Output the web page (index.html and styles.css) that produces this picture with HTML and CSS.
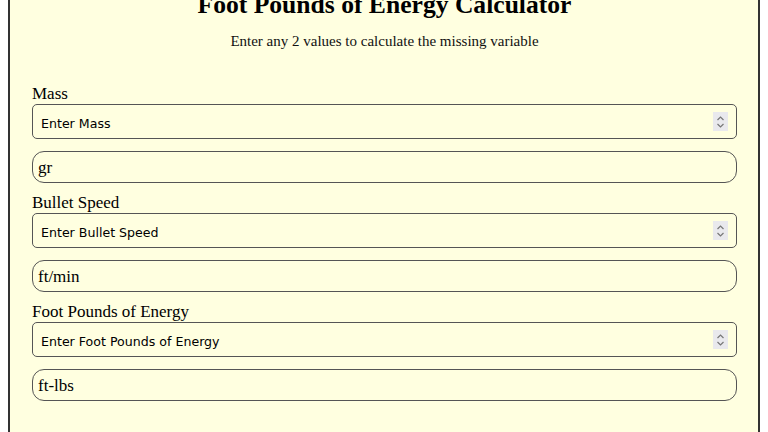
FILE: index.html
```html
<!DOCTYPE html>
<html lang="en">
<head>
<meta charset="utf-8">
<title>Foot Pounds of Energy Calculator</title>
<link rel="stylesheet" href="styles.css">
</head>
<body>
<div class="calc">
  <h1 class="title">Foot Pounds of Energy Calculator</h1>
  <p class="subtitle">Enter any 2 values to calculate the missing variable</p>
  <form class="form">
    <div class="group">
      <label class="label" for="mass">Mass</label>
      <span class="num-wrap">
        <input class="num" id="mass" type="number" placeholder="Enter Mass">
        <svg class="spin" width="15" height="19" viewBox="0 0 15 19"><polyline points="4.5,8 7.5,5 10.5,8" /><polyline points="4.5,12 7.5,15 10.5,12" /></svg>
      </span>
      <select class="unit"><option>gr</option></select>
    </div>
    <div class="group">
      <label class="label" for="speed">Bullet Speed</label>
      <span class="num-wrap">
        <input class="num" id="speed" type="number" placeholder="Enter Bullet Speed">
        <svg class="spin" width="15" height="19" viewBox="0 0 15 19"><polyline points="4.5,8 7.5,5 10.5,8" /><polyline points="4.5,12 7.5,15 10.5,12" /></svg>
      </span>
      <select class="unit"><option>ft/min</option></select>
    </div>
    <div class="group">
      <label class="label" for="fpe">Foot Pounds of Energy</label>
      <span class="num-wrap">
        <input class="num" id="fpe" type="number" placeholder="Enter Foot Pounds of Energy">
        <svg class="spin" width="15" height="19" viewBox="0 0 15 19"><polyline points="4.5,8 7.5,5 10.5,8" /><polyline points="4.5,12 7.5,15 10.5,12" /></svg>
      </span>
      <select class="unit"><option>ft-lbs</option></select>
    </div>
  </form>
</div>
</body>
</html>
```
FILE: styles.css
```css
html, body {
  background: #ffffff;
}
body {
  margin: 0 8px;
  font-family: "Liberation Serif", "Times New Roman", serif;
  color: #000;
}
.calc {
  overflow: hidden;
  border: 2px solid #333333;
  border-top: 0;
  background: #ffffe0;
  padding: 0 21px 60px 22px;
}
.title {
  margin: -9px 0 0;
  font-size: 25.6px;
  line-height: 28px;
  font-weight: bold;
  text-align: center;
}
.subtitle {
  margin: 14px 0 0;
  font-size: 15px;
  line-height: 17px;
  text-align: center;
  color: #111;
}
.form {
  margin: 34px 0 0;
}
.group {
  display: flex;
  flex-direction: column;
  margin-bottom: 10px;
}
.label {
  display: block;
  font-size: 17px;
  line-height: 19px;
}
.num-wrap {
  position: relative;
  display: block;
  margin-top: 1px;
}
.num {
  display: block;
  box-sizing: border-box;
  width: 100%;
  height: 35px;
  margin: 0;
  padding: 3px 8px 0;
  border: 1px solid #555555;
  border-radius: 5px;
  background: #ffffe0;
  font-family: "DejaVu Sans", Verdana, sans-serif;
  font-size: 12.6px;
  color: #000;
  outline: none;
  -moz-appearance: textfield;
}
.num::placeholder {
  color: #000;
  opacity: 1;
}
.num::-webkit-inner-spin-button,
.num::-webkit-outer-spin-button {
  -webkit-appearance: none;
  margin: 0;
}
.spin {
  position: absolute;
  right: 9px;
  top: 8px;
  background: #e9e9ed;
  pointer-events: none;
}
.spin polyline {
  fill: none;
  stroke: #777777;
  stroke-width: 1.2;
}
.unit {
  display: block;
  box-sizing: border-box;
  width: 100%;
  height: 32px;
  margin: 12px 0 0;
  padding: 0 5px;
  border: 1px solid #555555;
  border-radius: 12px;
  background: #ffffe0;
  -webkit-appearance: none;
  appearance: none;
  font-family: "Liberation Serif", "Times New Roman", serif;
  font-size: 17px;
  color: #000;
}
```
